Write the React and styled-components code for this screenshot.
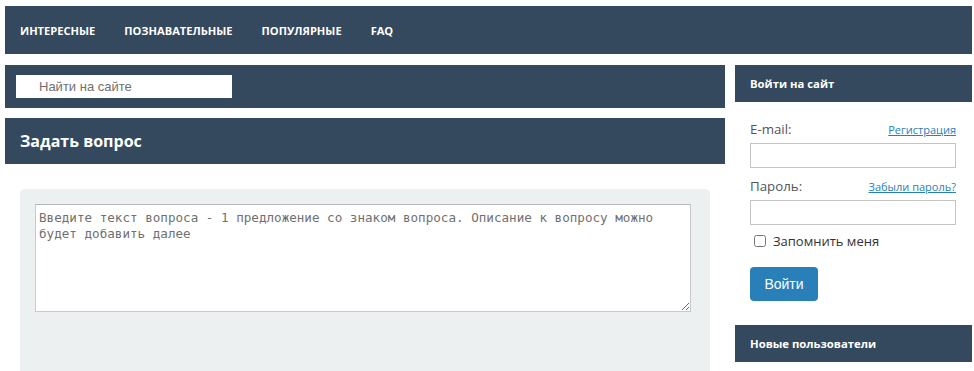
import React from "react";
import styled, { createGlobalStyle } from "styled-components";

const GlobalStyle = createGlobalStyle`
  html, body {
    margin: 0;
    padding: 0;
    background: #ffffff;
    font-family: "Open Sans", "Noto Sans", Arial, sans-serif;
    overflow: hidden;
  }
`;

const Page = styled.div`
  padding: 6px 2px 0 5px;
  display: flex;
  flex-direction: column;
  gap: 11px;
`;

const Bar = styled.div`
  background: #34495e;
  color: #ffffff;
  display: flex;
  align-items: center;
  box-sizing: border-box;
  height: ${({ h }) => h}px;
  padding: 0 ${({ px }) => px || 15}px;
`;

const Nav = styled(Bar)`
  gap: 29px;
`;

const NavLink = styled.a`
  color: #ffffff;
  font-weight: 700;
  font-size: 11.1px;
  text-decoration: none;
`;

const Columns = styled.div`
  display: flex;
  gap: 10px;
`;

const Main = styled.div`
  width: 720px;
  display: flex;
  flex-direction: column;
  gap: 10px;
`;

const SearchInput = styled.input`
  width: 216px;
  height: 23px;
  box-sizing: border-box;
  border: none;
  padding: 0 0 0 23px;
  font-family: "Liberation Sans", Arial, sans-serif;
  font-size: 13px;
  color: #555;
  &::placeholder {
    color: #6f6f6f;
  }
`;

const Title = styled.h2`
  margin: 0;
  font-size: 16px;
  font-weight: 700;
`;

const Panel = styled.div`
  margin: 15px 15px 0;
  background: #ecf0f1;
  border-radius: 5px 5px 0 0;
  padding: 15px 19px 60px 15px;
`;

const Question = styled.textarea`
  display: block;
  width: 100%;
  height: 108px;
  box-sizing: border-box;
  border: 1px solid #c9c9c9;
  border-top-color: #b8b8b8;
  padding: 5px 3px;
  font-family: "DejaVu Sans Mono", monospace;
  font-size: 12.6px;
  line-height: 16px;
  color: #555;
  resize: vertical;
  &::placeholder {
    color: #707070;
  }
`;

const Side = styled.div`
  width: 237px;
  display: flex;
  flex-direction: column;
`;

const SideTitle = styled.div`
  font-size: 11.3px;
  font-weight: 700;
`;

const Form = styled.form`
  padding: 19px 16px 24px 15px;
  display: flex;
  flex-direction: column;
`;

const LabelRow = styled.div`
  display: flex;
  justify-content: space-between;
  align-items: baseline;
  line-height: 16px;
  height: 16px;
  margin-bottom: 6px;
`;

const Label = styled.label`
  font-size: 13.3px;
  color: #555;
`;

const SmallLink = styled.a`
  font-size: 11px;
  color: #2980b9;
  text-decoration: underline;
`;

const Field = styled.input`
  height: 25px;
  box-sizing: border-box;
  border: 1px solid #c4c4c4;
  margin: 0 0 ${({ mb }) => mb}px;
`;

const Remember = styled.label`
  display: flex;
  align-items: center;
  gap: 7px;
  height: 16px;
  line-height: 16px;
  font-size: 13px;
  color: #333;
  margin-bottom: 18px;
  input {
    margin: 0 0 0 4px;
    width: 12px;
    height: 12px;
  }
`;

const Submit = styled.button`
  align-self: flex-start;
  width: 68px;
  height: 34px;
  border: none;
  border-radius: 4px;
  background: #2980b9;
  color: #fff;
  font-family: "Liberation Sans", Arial, sans-serif;
  font-size: 14px;
`;

export default function App() {
  return (
    <>
      <GlobalStyle />
      <Page>
        <Nav h={48}>
          <NavLink>ИНТЕРЕСНЫЕ</NavLink>
          <NavLink>ПОЗНАВАТЕЛЬНЫЕ</NavLink>
          <NavLink>ПОПУЛЯРНЫЕ</NavLink>
          <NavLink>FAQ</NavLink>
        </Nav>
        <Columns>
          <Main>
            <Bar h={43} px={11}>
              <SearchInput placeholder="Найти на сайте" />
            </Bar>
            <Bar h={46}>
              <Title>Задать вопрос</Title>
            </Bar>
            <Panel>
              <Question placeholder="Введите текст вопроса - 1 предложение со знаком вопроса. Описание к вопросу можно будет добавить далее" />
            </Panel>
          </Main>
          <Side>
            <Bar h={37}>
              <SideTitle>Войти на сайт</SideTitle>
            </Bar>
            <Form onSubmit={(e) => e.preventDefault()}>
              <LabelRow>
                <Label>E-mail:</Label>
                <SmallLink>Регистрация</SmallLink>
              </LabelRow>
              <Field type="text" mb={10} />
              <LabelRow>
                <Label>Пароль:</Label>
                <SmallLink>Забыли пароль?</SmallLink>
              </LabelRow>
              <Field type="password" mb={8} />
              <Remember>
                <input type="checkbox" />
                Запомнить меня
              </Remember>
              <Submit type="submit">Войти</Submit>
            </Form>
            <Bar h={37}>
              <SideTitle>Новые пользователи</SideTitle>
            </Bar>
          </Side>
        </Columns>
      </Page>
    </>
  );
}
